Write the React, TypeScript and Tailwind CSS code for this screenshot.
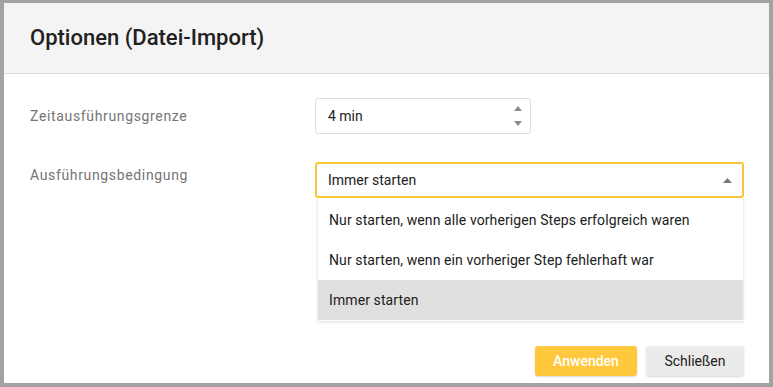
const options = [
  "Nur starten, wenn alle vorherigen Steps erfolgreich waren",
  "Nur starten, wenn ein vorheriger Step fehlerhaft war",
  "Immer starten",
];

export default function App() {
  const selected = "Immer starten";

  return (
    <div
      className="w-[773px] h-[387px] bg-[#a3a3a3] pt-[3px] pl-[4px]"
      style={{ fontFamily: "Roboto, 'Liberation Sans', sans-serif" }}
    >
      <div className="w-[765px] h-[380px] bg-white flex flex-col">
        {/* Header */}
        <div className="h-[71px] shrink-0 bg-[#f4f4f4] border-b border-[#dcdcdc] flex items-center px-[26px]">
          <h2 className="text-[22px] font-medium text-[#212121] pb-[2px]">Optionen (Datei-Import)</h2>
        </div>

        {/* Body */}
        <div className="flex-1 pt-[24px] pl-[26px] pr-[25px]">
          <div className="flex items-center h-[36px]">
            <label className="w-[285px] text-[14px] text-[#757575] tracking-[0.65px]">Zeitausführungsgrenze</label>
            <div className="w-[216px] h-[36px] border border-[#dedede] rounded-[3px] flex items-center justify-between pl-[12px] pr-[8px]">
              <span className="text-[14px] text-[#212121]">4 min</span>
              <div className="flex flex-col justify-between h-[24px] py-[2px]">
                <svg width="8" height="5" viewBox="0 0 8 5"><path d="M0 5 L4 0 L8 5 Z" fill="#8a8a8a" /></svg>
                <svg width="8" height="5" viewBox="0 0 8 5"><path d="M0 0 L4 5 L8 0 Z" fill="#8a8a8a" /></svg>
              </div>
            </div>
          </div>

          <div className="flex items-center h-[36px] mt-[28px]">
            <label className="w-[285px] text-[14px] text-[#757575] tracking-[0.65px] -mt-[9px]">Ausführungsbedingung</label>
            <div className="relative flex-1">
              <div className="h-[36px] border-2 border-[#fbc53a] rounded-[3px] flex items-center justify-between pl-[11px] pr-[10px]">
                <span className="text-[14px] text-[#212121]">{selected}</span>
                <svg width="9" height="5" viewBox="0 0 9 5"><path d="M0 5 L4.5 0 L9 5 Z" fill="#7a7a7a" /></svg>
              </div>
              <ul className="absolute left-[2px] right-0 top-[37px] bg-white border border-[#ececec] border-t-0 shadow-[0_1px_2px_rgba(0,0,0,0.08)] pt-[1px] pb-[1px]">
                {options.map((o) => (
                  <li
                    key={o}
                    className={
                      "h-[40px] flex items-center pl-[11px] text-[14px] text-[#212121] tracking-[0.1px] " +
                      (o === selected ? "bg-[#e0e0e0]" : "")
                    }
                  >
                    {o}
                  </li>
                ))}
              </ul>
            </div>
          </div>
        </div>

        {/* Footer */}
        <div className="flex justify-end gap-[9px] px-[25px] pb-[7px]">
          <button className="w-[102px] h-[30px] rounded-[3px] bg-[#ffc83d] text-white text-[14px] font-medium shadow-[0_1px_2px_rgba(0,0,0,0.15)]">
            Anwenden
          </button>
          <button className="w-[98px] h-[30px] rounded-[3px] bg-[#ebebeb] text-[#212121] text-[14px] shadow-[0_1px_2px_rgba(0,0,0,0.15)]">
            Schließen
          </button>
        </div>
      </div>
    </div>
  );
}
